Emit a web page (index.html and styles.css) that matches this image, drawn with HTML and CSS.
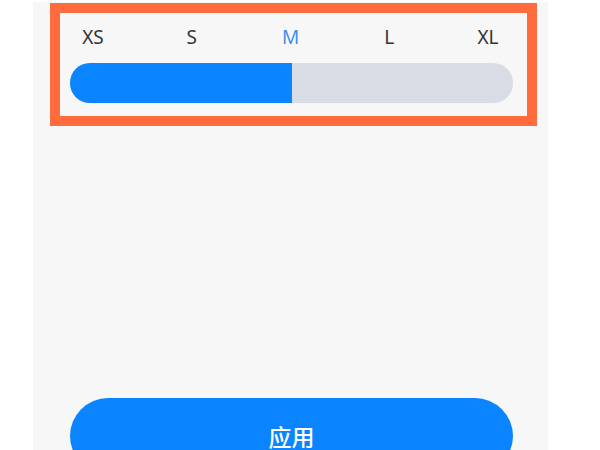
FILE: index.html
```html
<!DOCTYPE html>
<html lang="zh">
<head>
<meta charset="utf-8">
<link rel="stylesheet" href="styles.css">
</head>
<body>
<div class="panel">
  <div class="labels">
    <span class="label">XS</span>
    <span class="label">S</span>
    <span class="label active">M</span>
    <span class="label">L</span>
    <span class="label">XL</span>
  </div>
  <div class="track"><div class="fill" style="width: 50%"></div></div>
  <button class="apply">应用</button>
</div>
<div class="highlight"></div>
</body>
</html>
```
FILE: styles.css
```css
html, body {
  margin: 0;
  padding: 0;
  background: #ffffff;
  width: 600px;
  height: 450px;
  overflow: hidden;
  font-family: "Noto Sans", "Noto Sans CJK SC", sans-serif;
}
.panel {
  margin: 2px 0 0 33px;
  width: 515px;
  height: 448px;
  box-sizing: border-box;
  padding: 21px 35px 0 37px;
  background: #f7f7f7;
  display: flex;
  flex-direction: column;
  overflow: hidden;
}
.labels {
  display: flex;
  justify-content: space-between;
  margin: 0 5px 0 3px;
  font-size: 19px;
  line-height: 28px;
  color: #333333;
  flex-shrink: 0;
}
.label {
  width: 40px;
  text-align: center;
}
.label.active {
  color: #3f8fe8;
}
.track {
  margin-top: 12px;
  height: 40px;
  border-radius: 20px;
  background: #d8dce4;
  overflow: hidden;
  display: flex;
  flex-shrink: 0;
}
.fill {
  background: #0b85ff;
  height: 100%;
}
.apply {
  margin-top: 295px;
  height: 76px;
  border: none;
  border-radius: 38px;
  background: #0b85ff;
  color: #ffffff;
  font-family: "Noto Sans CJK SC", sans-serif;
  font-size: 23px;
  font-weight: 500;
  line-height: 76px;
  flex-shrink: 0;
  padding: 0;
}
.highlight {
  position: absolute;
  left: 50px;
  top: 3px;
  width: 487px;
  height: 123px;
  box-sizing: border-box;
  border: 10px solid #ff6b3d;
}
```
